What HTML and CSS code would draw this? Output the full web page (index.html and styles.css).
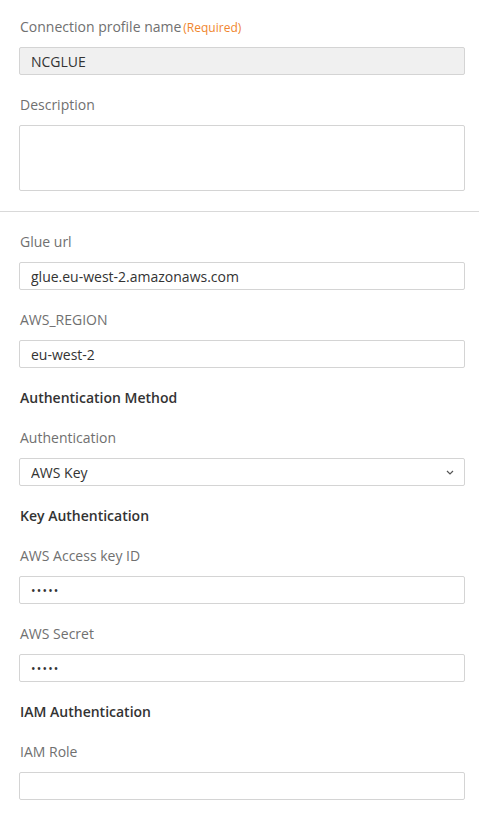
FILE: index.html
```html
<!DOCTYPE html>
<html lang="en">
<head>
<meta charset="utf-8">
<title>Connection profile</title>
<link rel="stylesheet" href="styles.css">
</head>
<body>
<form class="form">
  <section class="section section-top">
    <div class="field">
      <label class="label">Connection profile name<span class="required">(Required)</span></label>
      <input class="input input-readonly" type="text" value="NCGLUE" readonly>
    </div>
    <div class="field">
      <label class="label">Description</label>
      <textarea class="textarea"></textarea>
    </div>
  </section>
  <hr class="divider">
  <section class="section">
    <div class="field">
      <label class="label">Glue url</label>
      <input class="input" type="text" value="glue.eu-west-2.amazonaws.com">
    </div>
    <div class="field">
      <label class="label">AWS_REGION</label>
      <input class="input" type="text" value="eu-west-2">
    </div>
    <h3 class="heading">Authentication Method</h3>
    <div class="field">
      <label class="label">Authentication</label>
      <div class="select-wrap">
        <select class="input select">
          <option>AWS Key</option>
        </select>
        <svg class="chevron" width="8" height="5" viewBox="0 0 8 5" aria-hidden="true"><path d="M1 1l3 3 3-3" fill="none" stroke="#555" stroke-width="1.2"/></svg>
      </div>
    </div>
    <h3 class="heading">Key Authentication</h3>
    <div class="field">
      <label class="label">AWS Access key ID</label>
      <input class="input" type="password" value="12345">
    </div>
    <div class="field">
      <label class="label">AWS Secret</label>
      <input class="input" type="password" value="12345">
    </div>
    <h3 class="heading">IAM Authentication</h3>
    <div class="field">
      <label class="label">IAM Role</label>
      <input class="input" type="text" value="">
    </div>
  </section>
</form>
</body>
</html>
```
FILE: styles.css
```css
* { box-sizing: border-box; }
html, body {
  margin: 0;
  padding: 0;
  background: #fff;
}
body {
  font-family: "Open Sans", "Noto Sans", sans-serif;
  font-size: 14px;
  color: #333;
}
.form {
  display: flex;
  flex-direction: column;
  gap: 20px;
  padding-top: 17px;
}
.section {
  display: flex;
  flex-direction: column;
  gap: 20px;
  padding: 0 14px 0 19px;
}
.field {
  display: flex;
  flex-direction: column;
  gap: 10px;
}
.label {
  display: block;
  line-height: 20px;
  height: 20px;
  padding-left: 1px;
  color: #707070;
  font-size: 14px;
}
.required {
  color: #f0862e;
  font-size: 12px;
  margin-left: 2px;
}
.heading {
  margin: 0;
  line-height: 20px;
  height: 20px;
  padding-left: 1px;
  font-size: 14px;
  font-weight: 600;
  color: #333;
}
.input {
  display: block;
  width: 100%;
  height: 28px;
  margin: 0;
  padding: 0 10px 0 11px;
  border: 1px solid #d4d4d4;
  border-radius: 2px;
  background: #fff;
  font-family: "Open Sans", "Noto Sans", sans-serif;
  font-size: 14px;
  color: #333;
  outline: none;
}
.input[type="password"] {
  font-size: 12px;
  letter-spacing: 1.2px;
}
.input-readonly {
  background: #f0f0f0;
}
.textarea {
  display: block;
  width: 100%;
  height: 66px;
  margin: 0;
  border: 1px solid #d4d4d4;
  border-radius: 2px;
  resize: none;
  outline: none;
  font-family: "Open Sans", "Noto Sans", sans-serif;
}
.divider {
  margin: 0;
  border: 0;
  border-top: 1px solid #d9d9d9;
  height: 0;
}
.select-wrap {
  position: relative;
}
.select {
  appearance: none;
  -webkit-appearance: none;
}
.chevron {
  position: absolute;
  right: 11px;
  top: 12px;
  pointer-events: none;
}
```
